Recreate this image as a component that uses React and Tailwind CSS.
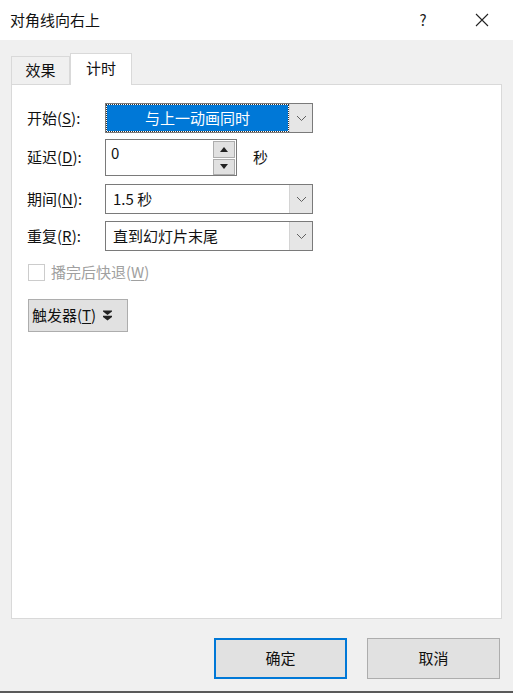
import React from 'react';

const font = { fontFamily: '"Noto Sans CJK SC", "Noto Sans", sans-serif' };

function Chevron() {
  return (
    <svg width="11" height="7" viewBox="0 0 11 7" fill="none">
      <path d="M1 1 L5.5 5.5 L10 1" stroke="#606060" strokeWidth="1" />
    </svg>
  );
}

function Select({ children, highlighted }) {
  return (
    <div className="flex h-[30px] w-[208px] border border-[#7a7a7a] bg-white">
      {highlighted ? (
        <div className="m-[1px] flex flex-1 items-center justify-center bg-[#0078d7] text-white outline outline-1 outline-dotted outline-[#333]">{children}</div>
      ) : (
        <div className="flex flex-1 items-center pl-[7px] text-[#111]">{children}</div>
      )}
      <div className="flex w-[23px] items-center justify-center border-l border-[#d4d4d4] bg-[#e6e6e6]">
        <Chevron />
      </div>
    </div>
  );
}

function Row({ label, u, rest, children, className }) {
  return (
    <div className={'flex items-center ' + (className || '')}>
      <div className="w-[78px] text-[#111]">
        {label}(<span className="underline underline-offset-2">{u}</span>){rest}
      </div>
      {children}
    </div>
  );
}

export default function App() {
  return (
    <div className="relative h-[693px] w-[513px] overflow-hidden bg-[#f0f0f0] text-[15px]" style={font}>
      <div className="flex h-[40px] items-center bg-white pl-[10px]">
        <div className="flex-1 text-[15px] text-[#111]">对角线向右上</div>
        <div className="w-[20px] text-center text-[15px] text-[#222]">?</div>
        <div className="ml-[42px] mr-[24px] flex items-center">
          <svg width="14" height="14" viewBox="0 0 14 14">
            <path d="M1 1 L13 13 M13 1 L1 13" stroke="#222" strokeWidth="1.1" />
          </svg>
        </div>
      </div>

      <div className="ml-[11px] mt-[13px] flex items-end">
        <div className="flex h-[28px] w-[59px] items-center justify-center border border-b-0 border-[#d9d9d9] bg-[#f0f0f0] text-[#111]">效果</div>
        <div className="relative z-10 -mb-px flex h-[32px] w-[62px] items-center justify-center border border-b-0 border-[#d9d9d9] bg-white pb-[3px] text-[#111]">计时</div>
      </div>

      <div className="mx-[11px] h-[535px] border border-[#d9d9d9] bg-white pl-[15px] pt-[18px]">
        <Row label="开始" u="S" rest=":">
          <Select highlighted>与上一动画同时</Select>
        </Row>
        <Row label="延迟" u="D" rest=":" className="mt-[6px]">
          <div className="flex h-[37px] w-[132px] border border-[#7a7a7a] bg-white">
            <div className="flex-1 pl-[5px] pt-[2px] text-[#111]">0</div>
            <div className="mr-[1px] flex w-[22px] flex-col justify-center">
              <div className="flex h-[17px] items-center justify-center border border-[#adadad] bg-[#e1e1e1]">
                <svg width="8" height="5" viewBox="0 0 8 5"><path d="M0 5 L4 0 L8 5 Z" fill="#222" /></svg>
              </div>
              <div className="mt-[1px] flex h-[16px] items-center justify-center border border-[#adadad] bg-[#e1e1e1]">
                <svg width="8" height="5" viewBox="0 0 8 5"><path d="M0 0 L4 5 L8 0 Z" fill="#222" /></svg>
              </div>
            </div>
          </div>
          <div className="ml-[16px] text-[#111]">秒</div>
        </Row>
        <Row label="期间" u="N" rest=":" className="mt-[8px]">
          <Select>1.5 秒</Select>
        </Row>
        <Row label="重复" u="R" rest=":" className="mt-[7px]">
          <Select>直到幻灯片末尾</Select>
        </Row>
        <div className="mt-[10px] ml-[1px] flex items-center">
          <div className="h-[17px] w-[17px] border border-[#cccccc] bg-white" />
          <div className="ml-[6px] text-[#a0a0a0]">
            播完后快退(<span className="underline underline-offset-2">W</span>)
          </div>
        </div>
        <div className="mt-[15px] ml-[1px] flex h-[33px] w-[100px] items-center border border-[#adadad] bg-[#e1e1e1] pl-[3px] text-[#111]">
          触发器(<span className="underline underline-offset-2">T</span>)
          <svg className="ml-[7px]" width="9" height="11" viewBox="0 0 9 11">
            <path d="M0 0.5 H9 V1.6 L4.5 5 L0 1.6 Z" fill="#222" />
            <path d="M0 5.8 H9 V6.9 L4.5 10.5 L0 6.9 Z" fill="#222" />
          </svg>
        </div>
      </div>

      <div className="mt-[19px] flex justify-end gap-[20px] pr-[13px]">
        <div className="flex h-[41px] w-[133px] items-center justify-center border-2 border-[#0078d7] bg-[#e1e1e1] text-[#111]">确定</div>
        <div className="flex h-[41px] w-[133px] items-center justify-center border border-[#adadad] bg-[#e1e1e1] text-[#111]">取消</div>
      </div>

      <div className="absolute bottom-0 left-0 h-[2px] w-full bg-[#5a5a5a]" />
    </div>
  );
}
